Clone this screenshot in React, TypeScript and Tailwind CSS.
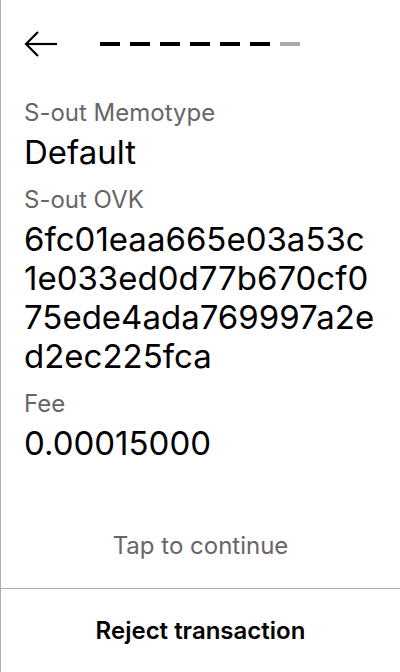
import React from 'react';

const fields = [
  { label: 'S-out Memotype', value: 'Default' },
  { label: 'S-out OVK', value: '6fc01eaa665e03a53c1e033ed0d77b670cf075ede4ada769997a2ed2ec225fca' },
  { label: 'Fee', value: '0.00015000' },
];

function BackArrow() {
  return (
    <svg width="34" height="28" viewBox="0 0 34 28" fill="none" stroke="black" strokeWidth="2.2">
      <path d="M33 14H2" />
      <path d="M14 2L2 14L14 26" />
    </svg>
  );
}

// long values wrap every 18 characters, like the device screen
const chunk = (s: string) => s.match(/.{1,18}/g) ?? [s];

export default function App() {
  const steps = 7;
  const current = 6;

  return (
    <div
      className="w-[400px] h-[672px] bg-white border-l border-[#b0b0b0] flex flex-col text-black"
      style={{ fontFamily: 'Inter, "Noto Sans", sans-serif' }}
    >
      {/* Header */}
      <div className="flex items-center h-[86px] pl-[23px] pt-[1px]">
        <BackArrow />
        <div className="flex gap-[10px] ml-[42px]">
          {Array.from({ length: steps }).map((_, i) => (
            <div
              key={i}
              className={i < current ? 'w-[20px] h-[4px] bg-black' : 'w-[20px] h-[4px] bg-[#aaaaaa]'}
            />
          ))}
        </div>
      </div>

      {/* Fields */}
      <div className="flex-1 pl-[23px] pr-[12px] pt-[12px] flex flex-col gap-[13px]">
        {fields.map((f) => (
          <div key={f.label}>
            <div className="text-[24px] leading-[30px] text-[#666666]">{f.label}</div>
            <div className="text-[33px] leading-[39px] mt-[5px]">
              {chunk(f.value).map((line, i) => (
                <div key={i}>{line}</div>
              ))}
            </div>
          </div>
        ))}
      </div>

      <div className="h-[88px] flex items-center justify-center text-[24px] text-[#666666] pt-[3px]">
        Tap to continue
      </div>

      <div className="h-[84px] border-t border-[#b0b0b0] flex items-center justify-center text-[24px] font-semibold">
        Reject transaction
      </div>
    </div>
  );
}
